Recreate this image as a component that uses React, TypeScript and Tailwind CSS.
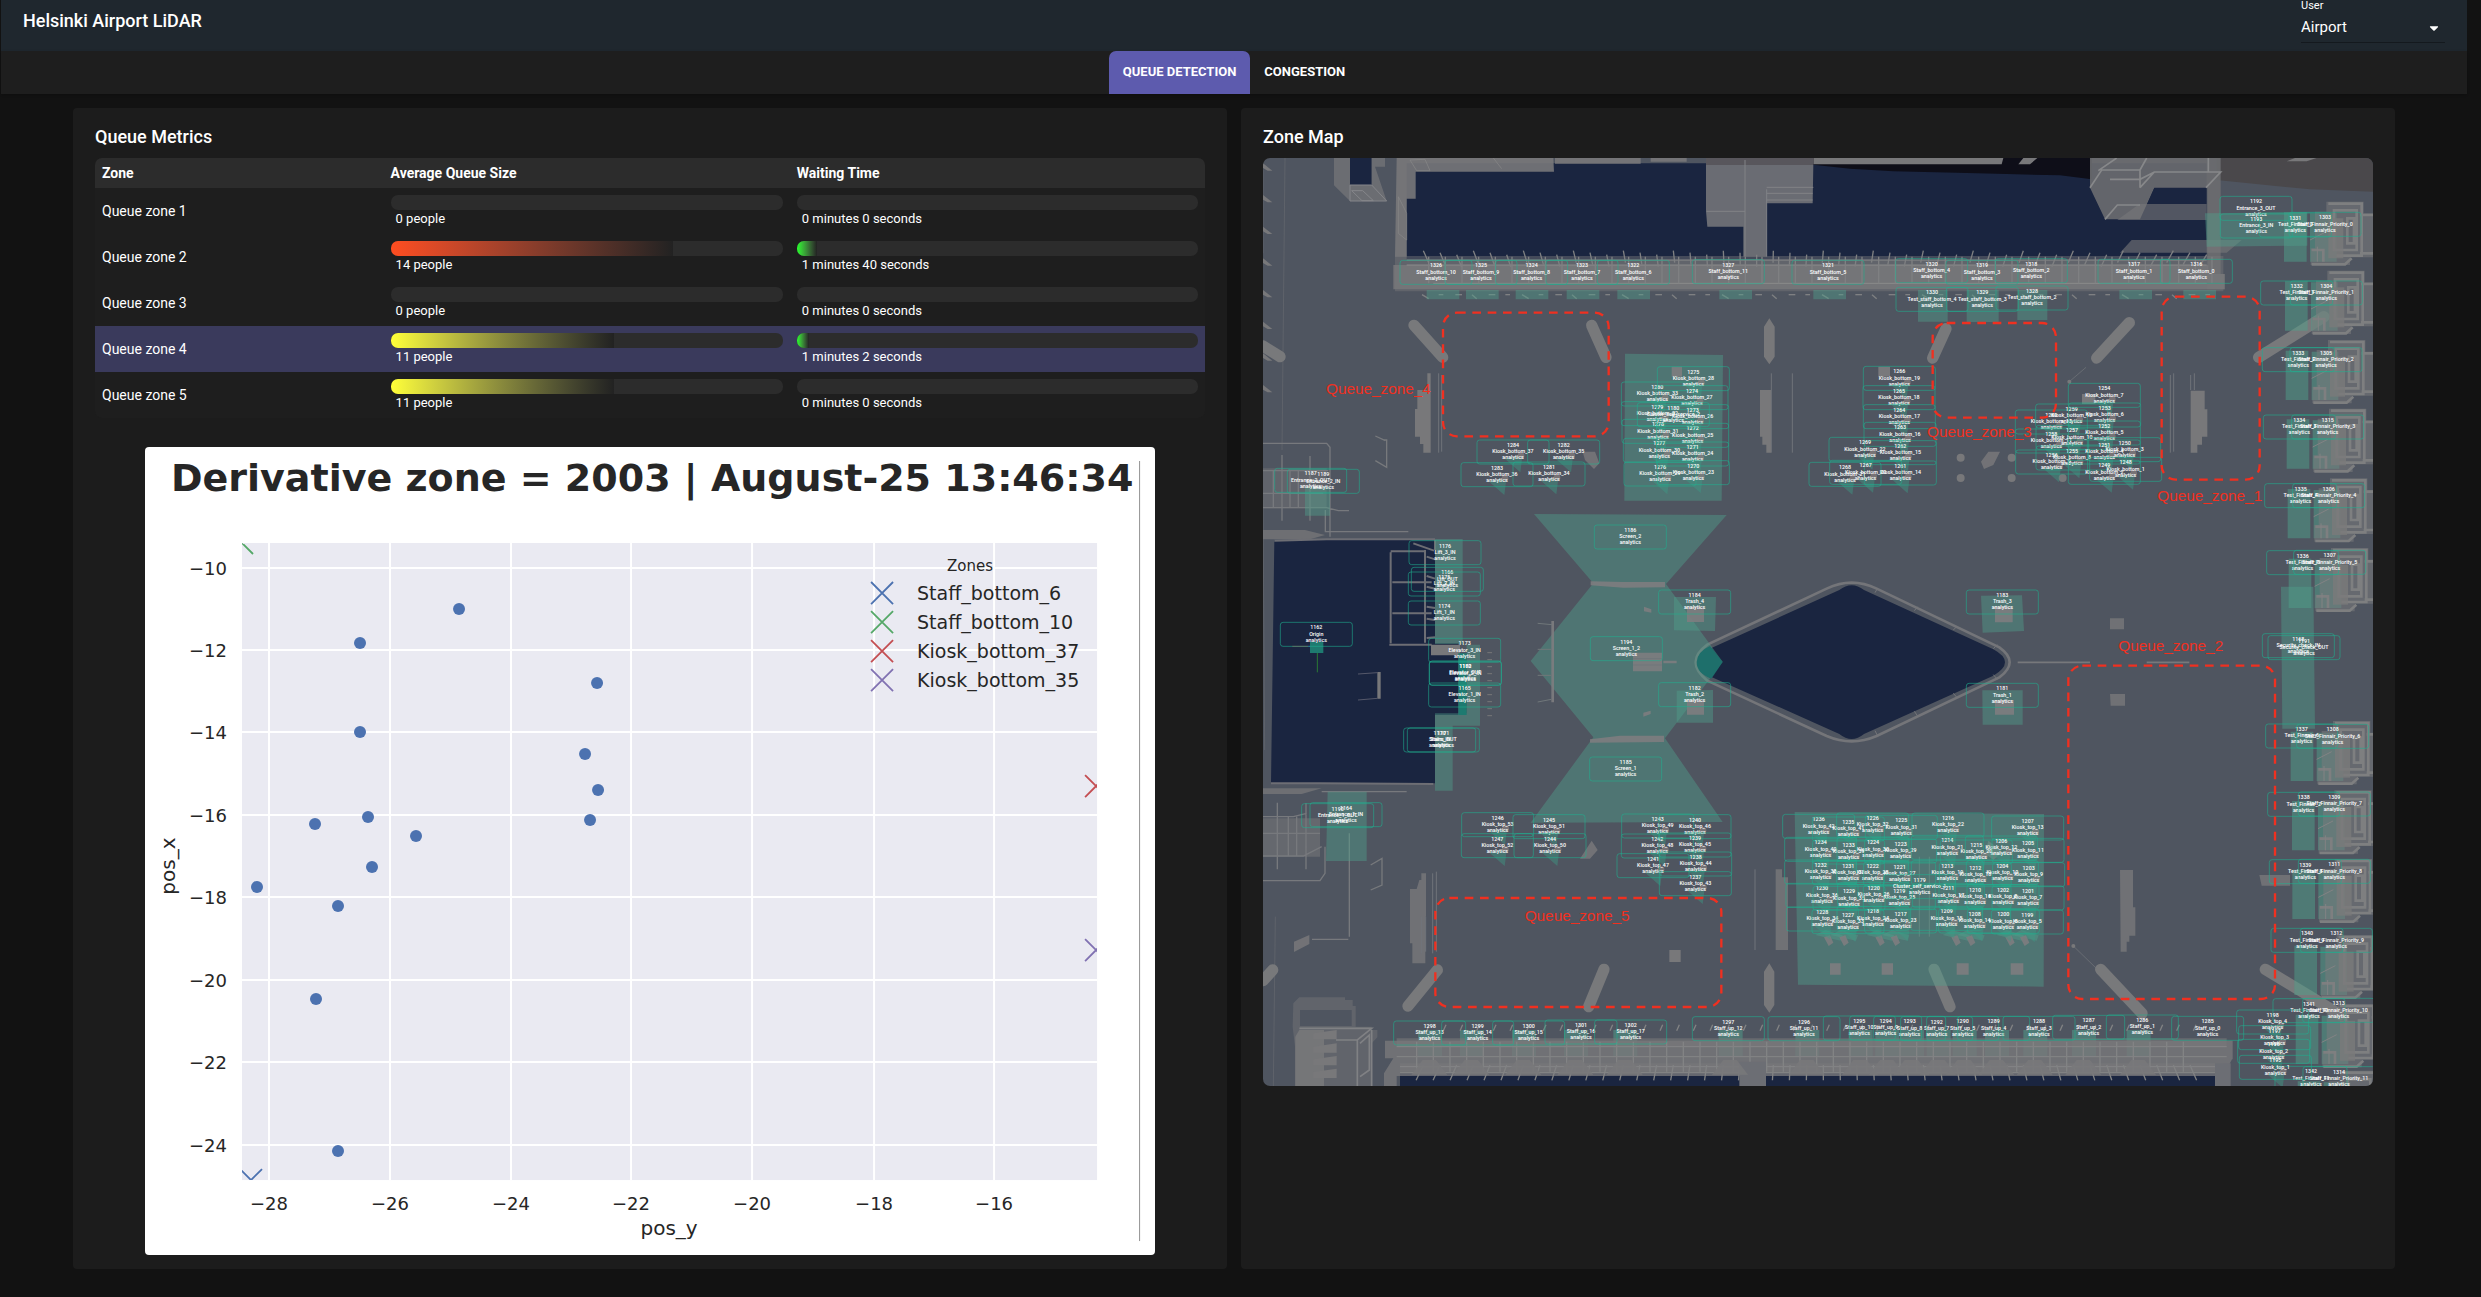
// components/AirportDashboard.tsx
import { useState } from 'react';
import { FaCaretDown } from 'react-icons/fa';

type Metric = {
  zone: string;
  people: number;
  size: number;
  sizeColor: string;
  wait: string;
  waitLevel: number;
};

const RED = 'from-[#ff4d20]';
const YELLOW = 'from-[#ffff38]';

const metrics: Metric[] = [
  { zone: 'Queue zone 1', people: 0, size: 0, sizeColor: YELLOW, wait: '0 minutes 0 seconds', waitLevel: 0 },
  { zone: 'Queue zone 2', people: 14, size: 72, sizeColor: RED, wait: '1 minutes 40 seconds', waitLevel: 5 },
  { zone: 'Queue zone 3', people: 0, size: 0, sizeColor: YELLOW, wait: '0 minutes 0 seconds', waitLevel: 0 },
  { zone: 'Queue zone 4', people: 11, size: 57, sizeColor: YELLOW, wait: '1 minutes 2 seconds', waitLevel: 3 },
  { zone: 'Queue zone 5', people: 11, size: 57, sizeColor: YELLOW, wait: '0 minutes 0 seconds', waitLevel: 0 },
];

function Bar({ value, color, label }: { value: number; color: string; label: string }) {
  return (
    <div>
      <div className="h-[15px] overflow-hidden rounded-[7px] bg-[#2c2c2c]">
        <div className={`h-full bg-linear-to-r ${color} to-[#222222]`} style={{ width: `${value}%` }} />
      </div>
      <div className="pl-[5px] text-[13px] leading-[17px]">{label}</div>
    </div>
  );
}

function MetricsTable() {
  const [selected, setSelected] = useState('Queue zone 4');

  return (
    <table className="w-full table-fixed border-separate border-spacing-0 overflow-hidden rounded-[7px] bg-[#1e1e1e] text-left text-sm">
      <thead>
        <tr className="h-[30px] bg-[#2c2c2c]">
          <th className="w-[26%] px-[7px] font-bold">Zone</th>
          <th className="w-[36.6%] px-[7px] font-bold">Average Queue Size</th>
          <th className="px-[7px] font-bold">Waiting Time</th>
        </tr>
      </thead>
      <tbody>
        {metrics.map((m) => (
          <tr
            key={m.zone}
            onClick={() => setSelected(m.zone)}
            className={selected === m.zone ? 'h-[46px] bg-[#3a3a5c]' : 'h-[46px]'}
          >
            <td className="px-[7px]">{m.zone}</td>
            <td className="px-[7px]">
              <Bar value={m.size} color={m.sizeColor} label={`${m.people} people`} />
            </td>
            <td className="px-[7px]">
              <Bar value={m.waitLevel} color="from-[#22ff2a]" label={m.wait} />
            </td>
          </tr>
        ))}
      </tbody>
    </table>
  );
}

/* ---------- Scatter chart ---------- */

const xTicks = [[-28, 124], [-26, 245], [-24, 366], [-22, 486], [-20, 607], [-18, 729], [-16, 849]];
const yTicks = [[-10, 121], [-12, 203], [-14, 285], [-16, 368], [-18, 450], [-20, 533], [-22, 615], [-24, 698]];
const points = [
  [314, 162], [215, 196], [452, 236], [215, 285], [440, 307], [453, 343], [445, 373], [170, 377],
  [223, 370], [271, 389], [227, 420], [112, 440], [193, 459], [171, 552], [193, 704],
];
const legend = [
  { name: 'Staff_bottom_6', color: '#4c72b0', y: 146 },
  { name: 'Staff_bottom_10', color: '#55a868', y: 175 },
  { name: 'Kiosk_bottom_37', color: '#c44e52', y: 204 },
  { name: 'Kiosk_bottom_35', color: '#8172b2', y: 233 },
];

function Cross({ x, y, color }: { x: number; y: number; color: string }) {
  return <path d={`M${x - 11} ${y - 11}l22 22m0 -22l-22 22`} stroke={color} strokeWidth="1.8" fill="none" />;
}

function ScatterChart() {
  return (
    <svg viewBox="0 0 1010 808" className="block w-full rounded bg-white font-['DejaVu_Sans',sans-serif]" fill="#262626">
      <clipPath id="plot">
        <rect x="97" y="96" width="855" height="637" />
      </clipPath>
      <text x="26" y="44" fontSize="38" fontWeight="bold">Derivative zone = 2003 | August-25 13:46:34</text>
      <path d="M994.5 14V794" stroke="#777" strokeWidth=".8" />
      <rect x="97" y="96" width="855" height="637" fill="#eaeaf2" />
      {xTicks.map(([v, x]) => (
        <g key={v}>
          <path d={`M${x} 96V733`} stroke="#fff" strokeWidth="2" />
          <text x={x} y="763" fontSize="18" textAnchor="middle">{`−${-v}`}</text>
        </g>
      ))}
      {yTicks.map(([v, y]) => (
        <g key={v}>
          <path d={`M97 ${y}H952`} stroke="#fff" strokeWidth="2" />
          <text x="82" y={y + 7} fontSize="18" textAnchor="end">{`−${-v}`}</text>
        </g>
      ))}
      {points.map(([x, y]) => (
        <circle key={`${x}-${y}`} cx={x} cy={y} r="6" fill="#4c72b0" />
      ))}
      <g clipPath="url(#plot)">
        <Cross x={97} y={96} color="#55a868" />
        <Cross x={951} y={339} color="#c44e52" />
        <Cross x={951} y={503} color="#8172b2" />
        <Cross x={106} y={733} color="#4c72b0" />
      </g>
      <text x="825" y="124" fontSize="15" textAnchor="middle">Zones</text>
      {legend.map((l) => (
        <g key={l.name}>
          <Cross x={737} y={l.y} color={l.color} />
          <text x="772" y={l.y + 7} fontSize="19">{l.name}</text>
        </g>
      ))}
      <text x="524" y="788" fontSize="20" textAnchor="middle">pos_y</text>
      <text transform="translate(30 419) rotate(-90)" fontSize="20" textAnchor="middle">pos_x</text>
    </svg>
  );
}

/* ---------- Zone map ---------- */

type Sensor = [number, number, number, string];

// x, y, id, name
const sensors: Sensor[] = [
  [528, 346, 1326, 'Staff_bottom_10'], [663, 346, 1325, 'Staff_bottom_9'], [815, 346, 1324, 'Staff_bottom_8'],
  [966, 346, 1323, 'Staff_bottom_7'], [1120, 346, 1322, 'Staff_bottom_6'], [1405, 344, 1327, 'Staff_bottom_11'],
  [1704, 346, 1321, 'Staff_bottom_5'], [2015, 341, 1320, 'Staff_bottom_4'], [2166, 346, 1319, 'Staff_bottom_3'],
  [2314, 341, 1318, 'Staff_bottom_2'], [2622, 343, 1317, 'Staff_bottom_1'], [2809, 343, 1316, 'Staff_bottom_0'],
  [2016, 427, 1330, 'Test_staff_bottom_4'], [2167, 427, 1329, 'Test_staff_bottom_3'], [2316, 423, 1328, 'Test_staff_bottom_2'],
  [759, 885, 1284, 'Kiosk_bottom_37'], [911, 885, 1282, 'Kiosk_bottom_35'], [711, 953, 1283, 'Kiosk_bottom_36'],
  [867, 951, 1281, 'Kiosk_bottom_34'], [1192, 711, 1280, 'Kiosk_bottom_33'], [1192, 770, 1279, 'Kiosk_bottom_32'],
  [1194, 823, 1278, 'Kiosk_bottom_31'], [1198, 880, 1277, 'Kiosk_bottom_30'], [1200, 951, 1276, 'Kiosk_bottom_29'],
  [1300, 665, 1275, 'Kiosk_bottom_28'], [1296, 722, 1274, 'Kiosk_bottom_27'], [1298, 779, 1273, 'Kiosk_bottom_26'],
  [1298, 835, 1272, 'Kiosk_bottom_25'], [1298, 891, 1271, 'Kiosk_bottom_24'], [1300, 947, 1270, 'Kiosk_bottom_23'],
  [1240, 773, 1180, 'Cluster_self_service_2'], [1918, 664, 1266, 'Kiosk_bottom_19'], [1917, 722, 1265, 'Kiosk_bottom_18'],
  [1918, 779, 1264, 'Kiosk_bottom_17'], [1920, 832, 1263, 'Kiosk_bottom_16'], [1921, 887, 1262, 'Kiosk_bottom_15'],
  [1921, 948, 1261, 'Kiosk_bottom_14'], [1815, 877, 1269, 'Kiosk_bottom_22'], [1755, 952, 1268, 'Kiosk_bottom_21'],
  [1817, 946, 1267, 'Kiosk_bottom_20'], [2374, 795, 1260, 'Kiosk_bottom_13'], [2374, 852, 1258, 'Kiosk_bottom_11'],
  [2375, 915, 1256, 'Kiosk_bottom_9'], [2435, 777, 1259, 'Kiosk_bottom_12'], [2436, 841, 1257, 'Kiosk_bottom_10'],
  [2436, 903, 1255, 'Kiosk_bottom_8'], [2533, 715, 1254, 'Kiosk_bottom_7'], [2534, 774, 1253, 'Kiosk_bottom_6'],
  [2533, 828, 1252, 'Kiosk_bottom_5'], [2533, 885, 1251, 'Kiosk_bottom_4'], [2594, 878, 1250, 'Kiosk_bottom_3'],
  [2533, 946, 1249, 'Kiosk_bottom_2'], [2597, 937, 1248, 'Kiosk_bottom_1'],
  [152, 970, 1187, 'Entrance_2_OUT'], [190, 973, 1189, 'Entrance_2_IN'], [2988, 154, 1192, 'Entrance_3_OUT'],
  [2989, 207, 1193, 'Entrance_3_IN'], [233, 1976, 1190, 'Entrance_1_OUT'], [258, 1973, 1164, 'Entrance_1_IN'],
  [3106, 204, 1331, 'Test_Finnair_0'], [3195, 202, 1303, 'Staff_Finnair_Priority_0'],
  [3110, 408, 1332, 'Test_Finnair_1'], [3199, 408, 1304, 'Staff_Finnair_Priority_1'],
  [3115, 608, 1333, 'Test_Finnair_2'], [3198, 608, 1305, 'Staff_Finnair_Priority_2'],
  [3118, 810, 1334, 'Test_Finnair_3'], [3203, 810, 1315, 'Staff_Finnair_Priority_3'],
  [3122, 1016, 1335, 'Test_Finnair_4'], [3206, 1016, 1306, 'Staff_Finnair_Priority_4'],
  [3128, 1217, 1336, 'Test_Finnair_5'], [3209, 1216, 1307, 'Staff_Finnair_Priority_5'],
  [3125, 1737, 1337, 'Test_Finnair_6'], [3218, 1738, 1308, 'Staff_Finnair_Priority_6'],
  [3131, 1942, 1338, 'Test_Finnair_7'], [3223, 1941, 1309, 'Staff_Finnair_Priority_7'],
  [3136, 2144, 1339, 'Test_Finnair_8'], [3223, 2143, 1311, 'Staff_Finnair_Priority_8'],
  [3141, 2350, 1340, 'Test_Finnair_9'], [3229, 2350, 1312, 'Staff_Finnair_Priority_9'],
  [3147, 2561, 1341, 'Test_Finnair_10'], [3236, 2560, 1313, 'Staff_Finnair_Priority_10'],
  [3153, 2764, 1342, 'Test_Finnair_11'], [3237, 2765, 1314, 'Staff_Finnair_Priority_11'],
  [555, 1187, 1176, 'Lift_3_IN'], [562, 1267, 1166, 'Lift_OUT'], [553, 1281, 1175, 'Lift_2_IN'],
  [553, 1368, 1174, 'Lift_1_IN'], [169, 1432, 1162, 'Origin'], [614, 1480, 1173, 'Elevator_3_IN'],
  [616, 1548, 1160, 'Elevator_OUT'], [616, 1549, 1172, 'Elevator_2_IN'], [614, 1614, 1165, 'Elevator_1_IN'],
  [539, 1749, 1170, 'Stairs_IN'], [550, 1749, 1171, 'Stairs_OUT'], [1111, 1140, 1186, 'Screen_2'],
  [1099, 1475, 1194, 'Screen_1_2'], [1097, 1836, 1185, 'Screen_1'], [1304, 1335, 1184, 'Trash_4'],
  [1304, 1613, 1182, 'Trash_2'], [2227, 1335, 1183, 'Trash_3'], [2227, 1615, 1181, 'Trash_1'],
  [3115, 1466, 1168, 'Security_check_IN'], [3132, 1472, 1191, 'Security_check_OUT'],
  [713, 2003, 1246, 'Kiosk_top_53'], [867, 2009, 1245, 'Kiosk_top_51'], [712, 2066, 1247, 'Kiosk_top_52'],
  [870, 2066, 1244, 'Kiosk_top_50'], [1193, 2007, 1243, 'Kiosk_top_49'], [1192, 2067, 1242, 'Kiosk_top_48'],
  [1179, 2126, 1241, 'Kiosk_top_47'], [1305, 2009, 1240, 'Kiosk_top_46'], [1305, 2064, 1239, 'Kiosk_top_45'],
  [1307, 2121, 1238, 'Kiosk_top_44'], [1306, 2180, 1237, 'Kiosk_top_43'], [1676, 2008, 1236, 'Kiosk_top_42'],
  [1765, 2016, 1235, 'Kiosk_top_41'], [1838, 2004, 1226, 'Kiosk_top_32'], [1924, 2011, 1225, 'Kiosk_top_31'],
  [2064, 2004, 1216, 'Kiosk_top_22'], [2303, 2013, 1207, 'Kiosk_top_13'], [1682, 2077, 1234, 'Kiosk_top_40'],
  [1766, 2085, 1233, 'Kiosk_top_39'], [1839, 2077, 1224, 'Kiosk_top_30'], [1922, 2082, 1223, 'Kiosk_top_29'],
  [2062, 2071, 1214, 'Kiosk_top_21'], [2149, 2085, 1215, 'Kiosk_top_20'], [2224, 2073, 1206, 'Kiosk_top_12'],
  [2304, 2080, 1205, 'Kiosk_top_11'], [1682, 2145, 1232, 'Kiosk_top_38'], [1765, 2147, 1231, 'Kiosk_top_37'],
  [1838, 2147, 1222, 'Kiosk_top_28'], [1919, 2151, 1221, 'Kiosk_top_27'], [2062, 2147, 1213, 'Kiosk_top_19'],
  [2146, 2153, 1212, 'Kiosk_top_18'], [2227, 2147, 1204, 'Kiosk_top_10'], [2306, 2153, 1203, 'Kiosk_top_9'],
  [1686, 2215, 1230, 'Kiosk_top_36'], [1767, 2224, 1229, 'Kiosk_top_35'], [1841, 2213, 1220, 'Kiosk_top_26'],
  [1918, 2222, 1219, 'Kiosk_top_25'], [1979, 2189, 1179, 'Cluster_self_service_1'], [2065, 2215, 1211, 'Kiosk_top_17'],
  [2145, 2220, 1210, 'Kiosk_top_16'], [2229, 2219, 1202, 'Kiosk_top_8'], [2304, 2223, 1201, 'Kiosk_top_7'],
  [1687, 2286, 1228, 'Kiosk_top_34'], [1764, 2294, 1227, 'Kiosk_top_33'], [1839, 2284, 1218, 'Kiosk_top_24'],
  [1922, 2292, 1217, 'Kiosk_top_23'], [2060, 2284, 1209, 'Kiosk_top_15'], [2144, 2292, 1208, 'Kiosk_top_14'],
  [2230, 2293, 1200, 'Kiosk_top_6'], [2302, 2295, 1199, 'Kiosk_top_5'],
  [509, 2628, 1298, 'Staff_up_13'], [653, 2628, 1299, 'Staff_up_14'], [806, 2628, 1300, 'Staff_up_15'],
  [963, 2625, 1301, 'Staff_up_16'], [1112, 2625, 1302, 'Staff_up_17'], [1405, 2615, 1297, 'Staff_up_12'],
  [1632, 2615, 1296, 'Staff_up_11'], [1798, 2613, 1295, 'Staff_up_10'], [1877, 2613, 1294, 'Staff_up_9'],
  [1949, 2614, 1293, 'Staff_up_8'], [2030, 2615, 1292, 'Staff_up_7'], [2108, 2614, 1290, 'Staff_up_5'],
  [2201, 2614, 1289, 'Staff_up_4'], [2337, 2614, 1288, 'Staff_up_3'], [2486, 2611, 1287, 'Staff_up_2'],
  [2647, 2610, 1286, 'Staff_up_1'], [2843, 2614, 1285, 'Staff_up_0'], [3038, 2595, 1198, 'Kiosk_top_4'],
  [3044, 2642, 1197, 'Kiosk_top_3'], [3041, 2683, 1196, 'Kiosk_top_2'], [3046, 2731, 1195, 'Kiosk_top_1'],
];

const queueZones = [
  { name: 'Queue_zone_1', x: 2705, y: 440, w: 294, h: 549, tx: 2692, ty: 1053 },
  { name: 'Queue_zone_2', x: 2425, y: 1547, w: 620, h: 1000, tx: 2575, ty: 1502 },
  { name: 'Queue_zone_3', x: 2018, y: 519, w: 370, h: 284, tx: 2001, ty: 860 },
  { name: 'Queue_zone_4', x: 549, y: 488, w: 497, h: 371, tx: 198, ty: 732 },
  { name: 'Queue_zone_5', x: 526, y: 2244, w: 858, h: 327, tx: 794, ty: 2314 },
];

// x shift and y of the check-in desks along the right wall
const desks = [
  [0, 155], [3, 362], [5, 570], [8, 776], [11, 985], [14, 1194],
  [20, 1713], [24, 1921], [25, 2127], [31, 2355], [35, 2562], [41, 2762],
];

const pillars = [
  'M462 526L548 622', 'M995 526L1038 622', 'M2058 536L2018 624', 'M2608 518L2510 624', 'M3192 500L2996 622',
  'M9 588L60 620', 'M532 2460L444 2568', 'M1032 2458L986 2570', 'M2022 2458L2070 2570', 'M2522 2458L2646 2590',
  'M3016 2458L3240 2594', 'M9 2492L38 2460',
];

const staffSpots = [500, 618, 767, 920, 1072, 1378, 1660, 2578, 2770];
const upSpots = [474, 600, 756, 912, 1060, 1376, 1606, 1766, 1846, 1920, 2000, 2078, 2175, 2290, 2436, 2600];
const roofTicks = Array.from({ length: 48 }, (_, i) => 490 + i * 50);

function Structures() {
  return (
    <g fill="#78787a">
      {/* floor openings */}
      <path d="M440 40H2840V330H440zM43 1170H525V1480H595V1695H525V1900H33zM270 24H335V105H270zM420 2770H2865V2808H420z" fill="#1a2540" />
      <path d="M1340 24H2495V88L2400 76L2240 72L2090 68L1900 64L1770 56L1640 42H1340z" fill="#0e0e18" />
      <path d="M2870 24H3339V125L3150 118L2870 90z" fill="#4a484b" />
      <path d="M9 60V310M75 24L66 900M9 1050L14 1800M46 2300L40 2808" stroke="#666a70" strokeWidth="2" />
      {Array.from({ length: 8 }, (_, i) => (
        <path key={i} d={`M9 ${40 + i * 95}l28 22h-14l-14 -8z`} />
      ))}

      {/* top building */}
      <path d="M410 24H880L882 65H467V146H440V320H405zM885 24H1142V41H885zM1172 24H1280V35H1172z" fillOpacity=".9" />
      <path d="M415 140L440 190V270L415 250zM450 30L495 28L510 62H470zM700 24L725 56" fill="none" stroke="#8a8a8a" strokeWidth="2" />
      <path d="M222 24H270V105H335V24H375V50L345 50L380 153H270L222 106z" fillOpacity=".7" />
      <path d="M270 105H335L380 153H270zM275 122H308L340 152H306z" fill="none" stroke="#85868a" strokeWidth="3" />
      <path d="M1660 24H2230L2225 43H1660zM2290 24H2332L2310 43H2275z" />
      <path d="M1338 45H1660L1658 160H1520V320H1450V230H1342L1338 184z" fill="#6a6c73" />
      <path d="M1338 24H1660V45H1338z" fill="#58565c" />
      <path d="M1340 184H1455M1455 30V320M1520 112H1660M1520 118V320M1520 130H1658M1520 150H1658" stroke="#818286" strokeWidth="3" fill="none" />
      <path d="M2490 24H2882V372H2894V418H2842V113H2683L2640 208H2535L2490 113z" fill="#6c6d70" fillOpacity=".9" />
      <path d="M2683 114H2838V162H2662z" fill="#1a2540" />
      <path d="M2638 162H2840V210H2572zM2615 270H2945L2900 308H2580z" fillOpacity=".6" />
      <path d="M2490 113L2525 60H2640V113M2550 88H2640L2683 66H2882L2838 113M2640 113L2683 66M2570 24L2515 62M2640 60L2660 24M2845 66V24M2535 208L2572 165H2640" fill="none" stroke="#87888a" strokeWidth="5" />
      <path d="M3105 24H3170L3140 34H3080z" />

      {/* upper roof band */}
      <path d="M405 318H2890V424H405z" fillOpacity=".45" />
      <path d="M400 345H2845V372H2894V418H400z" fillOpacity=".85" />
      <path d="M440 330H2840M440 345H2840M520 400H2840" stroke="#8b8b8b" strokeWidth="3" />
      {roofTicks.map((x, i) => (
        <g key={x} stroke="#7f8082" strokeWidth="4">
          <path d={`M${x} ${302 + (i % 3) * 6}l${(i - 20) * -0.8} 36M${x + 16} 320v80`} fill="none" />
          <path d={`M${x - 4} 434l${i % 2 ? 14 : 20} ${i % 3 ? 0 : 12}`} fill="none" />
        </g>
      ))}

      {/* staff areas under the lower roof */}
      {upSpots.map((x) => (
        <path key={x} d={`M${x} 2640h72v80h-72z`} fill="#50a08c" fillOpacity=".5" />
      ))}

      {/* lower roof band */}
      <path d="M375 2672H2918V2728H2916L2890 2778H410V2808H372V2770L400 2725H375z" fillOpacity=".8" />
      <path d="M410 2665H2900V2690H410zM420 2740H2890V2765H420z" fillOpacity=".6" />
      <path d="M410 2690H2900M410 2720H2900M420 2750H2890M420 2768H2890" stroke="#858586" strokeWidth="3" />
      {roofTicks.slice(0, 47).map((x, i) => (
        <path
          key={x}
          d={`M${x} 2745l${(24 - i) * -0.9} 46M${x - 20} 2675v90M${x + 10} 2642l8 -18`}
          fill="none"
          stroke="#828384"
          strokeWidth="4"
        />
      ))}
      <path d="M1438 2735H1518V2808H1438zM2865 2740H2912V2808H2865z" fill="#6c6e74" />
      {upSpots.map((x) => (
        <path key={x} d={`M${x - 20} 2774l34 -44h40l34 44z`} fillOpacity=".9" />
      ))}

      {/* pillars and benches */}
      {pillars.map((d) => (
        <path key={d} d={d} stroke="#78797b" strokeWidth="34" strokeLinecap="round" />
      ))}
      <path d="M1528 505L1544 530V620L1528 643L1512 620V530zM1528 2440L1543 2465V2565L1528 2588L1512 2565V2465z" />
      <path d="M472 720H502V670H512V908H490V882H480V860H465V777H472zM1500 720H1533V908H1519V884H1507V860H1500zM2792 722H2834V778H2842V860H2826V884H2812V908H2792z" />
      <path d="M478 2190H484V2170H498V2300H496V2440H457V2380H450V2217H470zM1547 2158H1566V2182H1584V2400H1547zM2580 2160H2619V2272H2626V2357H2608V2375H2600V2405H2582z" fillOpacity=".8" />
      <path d="M536 670V908M545 675V905M1534 670V908M1597 670V908M2731 675V908M2741 670V905M2792 675V720M2803 670V720M518 2170V2410M529 2165V2405M1485 2158V2400M484 2300V2410M497 2300V2405M1978 2120V2360M2008 2120V2360" stroke="#70747a" strokeWidth="3" fill="none" />
      <path d="M372 870H380V952L346 932M346 858L376 872M332 2145L366 2125V2205L332 2220" stroke="#77797c" strokeWidth="4" fill="none" />
      <path d="M968 905H1005L1018 940L1002 957L975 930zM2185 905H2220L2200 945L2172 957L2163 935zM995 2072L1013 2100L990 2126H960zM2185 2072L2228 2105L2200 2130L2175 2110zM102 2375L148 2355V2382L102 2406z" fillOpacity=".85" />

      {/* left entrances */}
      <path d="M9 955H200V1075H9z" fillOpacity=".45" />
      <path d="M9 880H200L210 892V1160M66 915V1112M150 918V1112M9 962H205M9 1030H190M9 1073H200L235 1082H267M40 962V1075M90 962V1075M115 962V1075M196 1080V1145H445" stroke="#77797d" strokeWidth="4" fill="none" />
      <path d="M9 2005H180V2120H9z" fillOpacity=".55" />
      <path d="M52 1958V2158M138 1960V2158M9 2000H100L140 1990M9 2118H130L185 2090M9 2192H180L195 2170V2090M185 1925H440M85 2000V2118M110 2000V2118M9 2050H180M268 2050V2360M156 2368H265" stroke="#77797d" strokeWidth="4" fill="none" />
      <path d="M9 1140H135L195 1155L150 1168H9zM9 1915H130L185 1915L125 1932H9z" fillOpacity=".75" />

      {/* lower left tower */}
      <path d="M100 2560L118 2542H255V2550H278V2568H287V2630H335V2640H352V2662L335 2680V2808H105V2690L98 2630z" fillOpacity=".45" />
      <path d="M120 2580H275V2628H120z" fill="#4f5560" />
      <path d="M118 2640H192V2808H106V2660z" fillOpacity=".9" />
      {[2650, 2690, 2728, 2766].map((y) => (
        <path key={y} d={`M160 ${y}L230 ${y - 10}V${y + 18}H160z`} />
      ))}
      <path d="M118 2635H335L292 2670H228M292 2670V2808M300 2680L328 2655V2760L300 2780M335 2640V2808" stroke="#808184" strokeWidth="5" fill="none" />

      {/* security hall */}
      <path d="M43 1172L200 1168H525M33 1900H180L520 1902M525 1170V1200M392 1207V1480M495 1200V1478M392 1204H495M397 1297H515M397 1390H515M388 1484H515M460 1180L522 1202M500 1220L525 1228M500 1278L525 1286M500 1310L525 1316M500 1370L525 1374M500 1406L525 1410M500 1464L525 1462" stroke="#6d6e74" strokeWidth="6" fill="none" />
      <path d="M352 1566H362V1646H352zM513 1484H600V1516H513z" />
      <path d="M294 1572L352 1568M294 1650L352 1645" stroke="#55586a" strokeWidth="3" />
      <path d="M97 1489H145" stroke="#8b4040" strokeWidth="3" />
      <path d="M145 1489H170" stroke="#2d3bb0" strokeWidth="3" />
      <path d="M172 1480V1567" stroke="#2a7a34" strokeWidth="3" />
      {Array.from({ length: 10 }, (_, i) => (
        <path key={i} d={`M682 ${1508 + i * 21}h14`} stroke="#777" strokeWidth="3" />
      ))}

      {/* atrium */}
      <path d="M1738 1320Q1775 1292 1812 1320L2200 1498Q2270 1536 2200 1577L1812 1752Q1775 1782 1738 1752L1346 1577Q1280 1536 1346 1498z" fill="#1a2540" />
      <path d="M1700 1316Q1775 1280 1850 1316L2218 1492Q2280 1536 2218 1582L1850 1758Q1775 1790 1700 1758L1342 1592Q1272 1536 1342 1484z" fill="none" stroke="#747579" strokeWidth="8" />
      <path d="M1845 1328L1852 1316M1963 1382L1973 1370M2080 1440L2092 1428M2200 1496L2212 1484M1845 1742L1852 1756M1963 1684L1973 1698M2080 1630L2092 1644M2200 1574L2212 1588" stroke="#747579" strokeWidth="3" />
      <path d="M2273 1537H2490M2660 1537H2788" stroke="#77787b" strokeWidth="5" />
      <path d="M2550 1405H2592V1438H2550zM2550 1632H2595V1667H2552zM2998 2175H3090V2207H3005z" fillOpacity=".8" />
      <path d="M2428 695L2478 652M2440 2388L2510 2456" stroke="#74777b" strokeWidth="2" />
      <circle cx="2428" cy="695" r="6" />
      <circle cx="2440" cy="2388" r="6" />
      <path d="M1228 2400h34v36h-34z" />
      {[[2102, 923], [2255, 923], [2102, 984], [2255, 984], [2408, 984]].map(([x, y]) => (
        <circle key={`${x}-${y}`} cx={x} cy={y} r="12" />
      ))}
    </g>
  );
}

function Coverage() {
  return (
    <g fill="#4f9f8a" fillOpacity=".44">
      {/* screens */}
      <path d="M822 1092L1400 1095L1218 1302L1388 1535L1215 1765L1388 2016L812 2018L1000 1762L812 1533L1000 1300z" />
      <path d="M1350 1488L1388 1536L1354 1586Q1310 1570 1310 1536Q1312 1505 1350 1488z" fill="#1e6f6b" fillOpacity="1" />
      {/* kiosks */}
      <path d="M1095 611L1389 615L1385 1052H1093zM1604 1986L2352 1992L2351 2510L1614 2504z" />
      {/* entrances, lifts, stairs */}
      <path d="M135 1010H210V1097H135zM203 1925H320V2133H198zM2835 190L3142 187V287L2840 290z" />
      <path d="M525 1167H608V1484H660V1727H578V1922H525V1690H620V1482H525z" />
      <path d="M595 1510H620V1695H595zM150 1475H190V1509H150z" fill="#1e7a70" fillOpacity="1" />
      <path d="M3063 1310H3160L3165 1736H3067z" />
      {/* trash cans */}
      <path d="M1242 1341H1368L1365 1443L1242 1441zM1250 1622L1359 1620V1718H1250zM2163 1337L2286 1336L2292 1443L2168 1448zM2167 1621H2288V1724H2168z" />
      <path d="M1974 420H2063V515H1974zM2120 420H2216V516H2120zM2272 420H2362V510H2272z" />
      {staffSpots.map((x) => (
        <path key={x} d={`M${x} 420H${x + 98}V448H${x}z`} />
      ))}
      <path d="M1281 1370H1332V1416H1281zM1281 1650H1332V1694H1281zM2205 1370H2258V1417H2205zM2205 1650H2262V1694H2205z" fill="#7d7d7f" fillOpacity=".9" />
      <path d="M992 1294L1090 1296H1215V1312L1090 1313L992 1306zM990 1768L1080 1757H1212V1776L990 1778zM874 1413H882V1657H874zM1119 1508H1206V1564H1119zM1210 1532H1250V1540H1210zM1152 1370l22 8v10l-22 -4zM1150 1688l22 -6v10l-22 8z" fill="#7d7d7f" fillOpacity=".9" />
      <path d="M833 1420L876 1424M833 1498H874M833 1576H874M833 1656L874 1648M1119 1526H1206M1119 1545H1206" stroke="#70777a" strokeWidth="3" />
      <path d="M1710 2440H1742V2474H1710zM1865 2440H1899V2474H1865zM2090 2440H2126V2474H2090zM2252 2440H2290V2474H2252zM1235 650H1266V680H1235zM1855 650H1890V680H1855zM2466 732H2506V762H2466z" fill="#7d7d7f" fillOpacity=".9" />
      {[1704, 1750, 1858, 1904, 2086, 2130, 2248, 2292].map((x) => (
        <g key={x}>
          <path d={`M${x - 38} 2355l30 -15l52 16l-6 16z`} />
          <path d={`M${x - 12} 2362l18 -6l10 22l-14 10z`} fill="#7d7d7f" fillOpacity=".9" />
        </g>
      ))}
    </g>
  );
}

function Desk({ dx, y }: { dx: number; y: number }) {
  return (
    <g transform={`translate(${dx} ${y})`}>
      <path d="M3072 32H3140V180H3072zM3150 35H3230V180H3150z" fill="#4f9f8a" fillOpacity=".5" />
      <path d="M3199 0H3311V35H3345V167H3270V190H3152V140H3165V30H3199z" fill="#7a7a7b" fillOpacity=".55" />
      <path d="M3205 6H3305V162H3230M3222 26H3290V145H3222zM3262 50H3282V125H3262zM3300 40H3345M3300 155H3345M3155 188H3255L3275 170M3155 145H3190V180" stroke="#7e7f80" strokeWidth="8" fill="none" />
      <path d="M3205 50H3250V170H3205z" fill="#7a7a7b" fillOpacity=".8" />
      <path d="M3150 115L3195 92M3172 135V180" stroke="#828384" strokeWidth="3" fill="none" />
    </g>
  );
}

function SensorLabel({ sensor: [x, y, id, name] }: { sensor: Sensor }) {
  return (
    <g>
      {name.startsWith('Kiosk') && (
        <>
          <path d={`M${x - 26} ${y + 40}L${x + 28} ${y + 34}L${x + 22} ${y + 82}z`} fill="#3f9a86" fillOpacity=".45" />
          <circle cx={x + 24} cy={y + 32} r="10" fill="#8a8080" fillOpacity=".7" />
        </>
      )}
      <rect x={x - 108} y={y - 15} width="216" height="72" rx="8" fill="none" stroke="#1fb08f" strokeOpacity=".7" strokeWidth="2.5" />
      <text textAnchor="middle" fill="#fff" fontSize="16" fontWeight="500">
        <tspan x={x} y={y + 6}>{id}</tspan>
        <tspan x={x} y={y + 25}>{name}</tspan>
        <tspan x={x} y={y + 43}>analytics</tspan>
      </text>
    </g>
  );
}

function ZoneMap() {
  return (
    <svg viewBox="9 24 3330 2784" className="block w-full rounded-[7px] bg-[#4f5560]">
      <Structures />
      {desks.map(([dx, y]) => (
        <Desk key={y} dx={dx} y={y} />
      ))}
      <Coverage />
      {sensors.map((s) => (
        <SensorLabel key={s[2]} sensor={s} />
      ))}
      {queueZones.map((z) => (
        <g key={z.name} className="font-['Liberation_Sans',sans-serif]">
          <rect x={z.x} y={z.y} width={z.w} height={z.h} rx="42" fill="none" stroke="#f03020" strokeWidth="7" strokeDasharray="26 20" />
          <text x={z.tx} y={z.ty} fontSize="46" fill="#f03020">{z.name}</text>
        </g>
      ))}
    </svg>
  );
}

/* ---------- Page ---------- */

const tabs = ['Queue Detection', 'Congestion'];

export default function App() {
  const [tab, setTab] = useState(tabs[0]);

  return (
    <div className="min-h-screen bg-[#121212] pr-[14px] pl-px font-[Roboto,sans-serif] text-white">
      {/* Header */}
      <header className="flex h-[51px] items-start justify-between bg-[#1f272e] px-[22px]">
        <h1 className="pt-2 text-[18px] leading-[26px] font-medium">Helsinki Airport LiDAR</h1>
        <div className="relative w-36">
          <label htmlFor="user" className="block text-[11px] leading-[11px]">User</label>
          <select id="user" className="block h-8 w-full appearance-none border-b border-[#14191e] bg-transparent pt-[2px] text-[15px]">
            <option>Airport</option>
          </select>
          <FaCaretDown className="pointer-events-none absolute right-1 bottom-2 text-sm" />
        </div>
      </header>

      {/* Tabs */}
      <nav className="flex h-[43px] justify-center bg-[#1e1e1e] shadow">
        {tabs.map((t) => (
          <button
            key={t}
            onClick={() => setTab(t)}
            className={`rounded-t-[7px] px-[14px] pb-[2px] text-[13px] font-bold uppercase ${tab === t ? 'bg-[#5d5bae]' : ''}`}
          >
            {t}
          </button>
        ))}
      </nav>

      {/* Panels */}
      <main className="grid grid-cols-2 gap-[14px] px-[72px] py-[14px]">
        <section className="rounded bg-[#1c1c1c] px-[22px] pt-4 pb-[14px]">
          <h2 className="pb-2 text-[18px] leading-[26px] font-medium">Queue Metrics</h2>
          <MetricsTable />
          <div className="mx-auto mt-[29px] w-[91%]">
            <ScatterChart />
          </div>
        </section>
        <section className="rounded bg-[#1c1c1c] px-[22px] pt-4 pb-[14px]">
          <h2 className="pb-2 text-[18px] leading-[26px] font-medium">Zone Map</h2>
          <ZoneMap />
        </section>
      </main>
    </div>
  );
}
